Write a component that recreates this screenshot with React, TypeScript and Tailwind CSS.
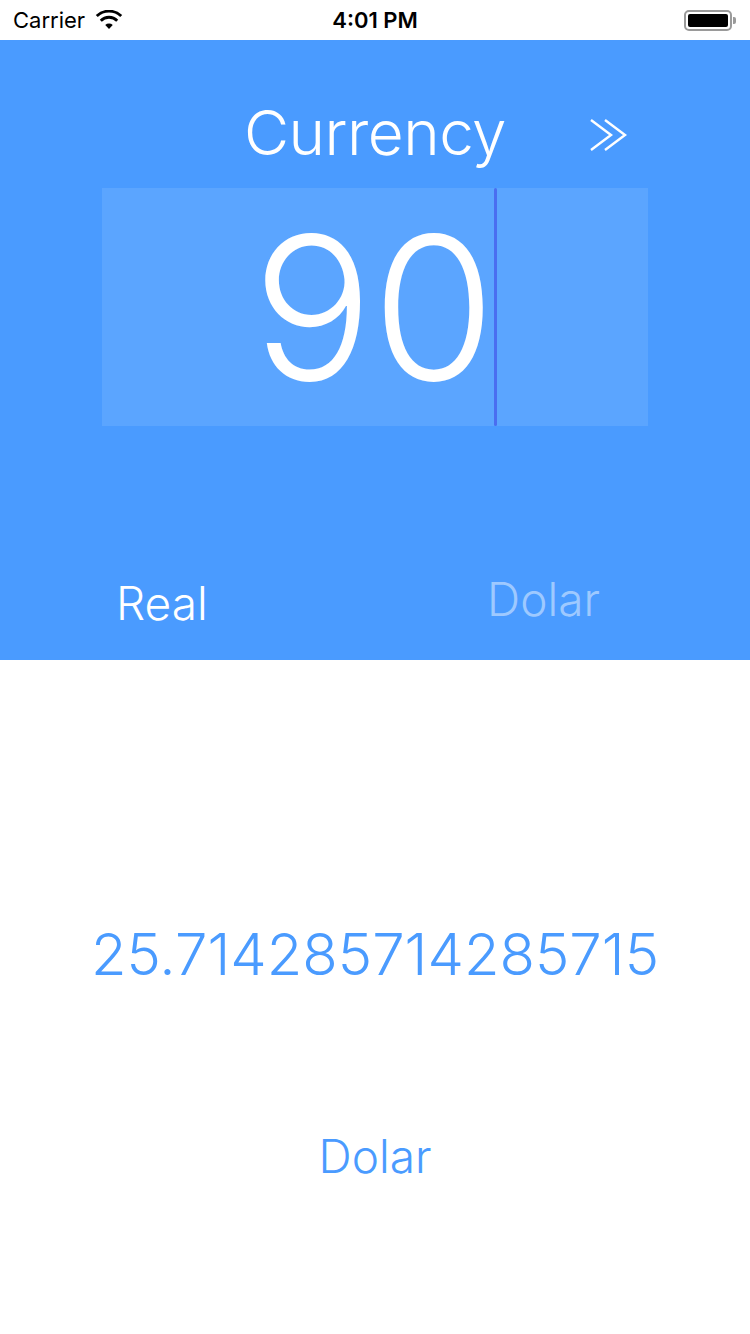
const font = { fontFamily: "Inter, 'Liberation Sans', sans-serif" };

const StatusBar = () => (
  <div className="h-[40px] bg-white flex items-center justify-between px-[13px] text-black">
    <div className="flex items-center gap-[10px] w-[200px]">
      <span className="text-[22px] leading-none">Carrier</span>
      <svg width="28" height="20" viewBox="0 0 24 18">
        <path d="M12 17 L8.6 13.4 A5 5 0 0 1 15.4 13.4 Z" fill="black" />
        <path d="M4.6 9.6 A10.5 10.5 0 0 1 19.4 9.6" stroke="black" strokeWidth="2.6" fill="none" />
        <path d="M1 5.4 A16 16 0 0 1 23 5.4" stroke="black" strokeWidth="2.6" fill="none" />
      </svg>
    </div>
    <span className="text-[22px] font-semibold leading-none">4:01 PM</span>
    <div className="w-[200px] flex justify-end items-center pr-[1px]">
      <div className="w-[48px] h-[21px] rounded-[5px] border-[2px] border-[#9a9a9a] p-[2px]">
        <div className="w-full h-full bg-black rounded-[2px]" />
      </div>
      <div className="w-[3px] h-[7px] bg-[#9a9a9a] rounded-r-[2px] ml-[1px]" />
    </div>
  </div>
);

const App = () => {
  return (
    <div className="w-[750px] h-[1334px] bg-white" style={font}>
      <StatusBar />

      <div className="h-[620px] bg-[#4a9bff] flex flex-col">
        <div className="grid grid-cols-[1fr_auto_1fr] items-center mt-[53px]">
          <div />
          <h1 className="text-white text-[62px] font-light leading-[80px] tracking-[-0.5px]">Currency</h1>
          <div className="pl-[83px] pt-[4px]">
            <svg width="40" height="36" viewBox="0 0 40 36" fill="none" stroke="white" strokeWidth="2.4">
              <path d="M2 3 L22 18 L2 33" />
              <path d="M16 3 L36 18 L16 33" />
            </svg>
          </div>
        </div>

        <div className="mx-[102px] mt-[15px] h-[238px] bg-[#5ba5ff] flex justify-center">
          <span className="text-white text-[200px] font-light leading-[238px] tracking-[-1px]">90</span>
          <span className="w-[3px] h-full bg-[#4a6ef0] rounded-full" />
        </div>

        <div className="flex justify-between pl-[116px] pr-[150px] mt-[150px]">
          <span className="text-white text-[46px] font-light leading-none mt-[4px]">Real</span>
          <span className="text-[#9ec9ff] text-[46px] font-light leading-none">Dolar</span>
        </div>
      </div>

      <div className="flex flex-col items-center text-[#4a9bff] font-light">
        <span className="text-[58px] leading-none mt-[265px]">25.714285714285715</span>
        <span className="text-[46px] leading-none mt-[150px]">Dolar</span>
      </div>
    </div>
  );
};

export default App;
